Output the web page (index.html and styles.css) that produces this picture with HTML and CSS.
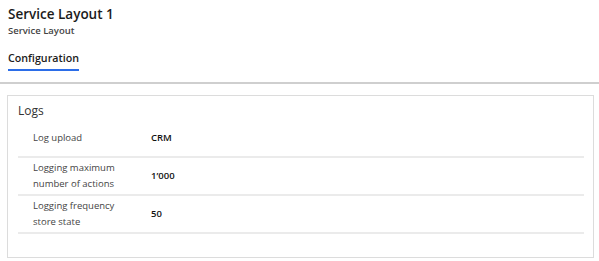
FILE: index.html
```html
<!DOCTYPE html>
<html>
  <head>
    <meta charset="UTF-8" />
    <title>Service Layout 1</title>
    <link rel="stylesheet" href="styles.css">
  </head>
  <body>
    <div class="page-header">
      <div class="title">Service Layout 1</div>
      <div class="subtitle">Service Layout</div>
      <div class="tabs">
        <div class="tab active">Configuration</div>
      </div>
    </div>

    <div class="content">
      <div class="card">
        <div class="card-title">Logs</div>
        <div class="row">
          <div class="label">Log upload</div>
          <div class="value">CRM</div>
        </div>
        <div class="row">
          <div class="label">Logging maximum number of actions</div>
          <div class="value">1’000</div>
        </div>
        <div class="row">
          <div class="label">Logging frequency store state</div>
          <div class="value">50</div>
        </div>
      </div>
    </div>
  </body>
</html>
```

FILE: styles.css
```css
body {
  margin: 0;
  padding: 0;
  background-color: #fff;
  color: #111;
  font-family: "Open Sans", "Noto Sans", sans-serif;
}

.page-header {
  padding: 5px 8px 0;
  border-bottom: 2px solid #cfcfcf;
}

.title {
  font-size: 13.5px;
  font-weight: 600;
  line-height: 19px;
  color: #1b1b1b;
}

.subtitle {
  font-size: 9.5px;
  font-weight: 600;
  line-height: 13px;
  color: #444;
}

.tabs {
  display: flex;
  margin-top: 14px;
}

.tab {
  font-size: 10.7px;
  font-weight: 600;
  line-height: 15px;
  padding-bottom: 3px;
  margin-bottom: 11px;
  color: #1b1b1b;
}

.tab.active {
  border-bottom: 2px solid #2b6de8;
}

.content {
  padding: 11px 5px 4px 7px;
}

.card {
  border: 1px solid #dcdcdc;
  padding: 6px 9px 23px 10px;
}

.card-title {
  font-size: 12px;
  line-height: 18px;
  color: #333;
}

.row {
  display: flex;
  align-items: center;
  height: 36px;
  border-bottom: 2px solid #ebebeb;
  font-size: 9.5px;
  line-height: 16px;
}

.label {
  width: 133px;
  padding-left: 15px;
  padding-right: 28px;
  box-sizing: border-box;
  flex-shrink: 0;
  color: #444;
}

.value {
  font-weight: 600;
  color: #111;
}
```
